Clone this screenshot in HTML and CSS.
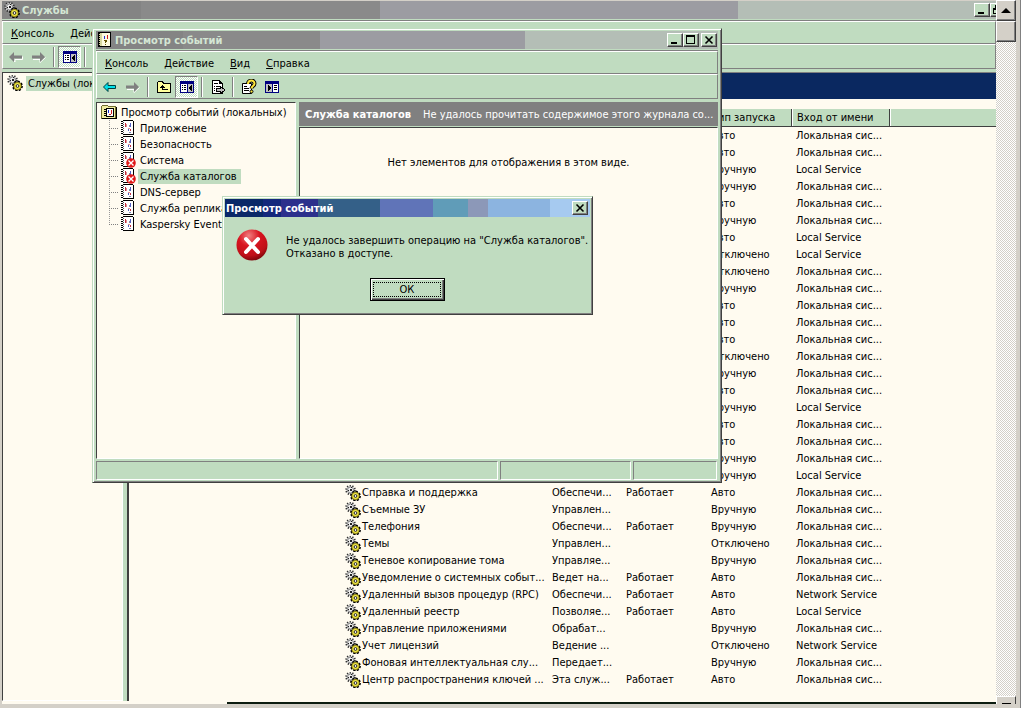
FILE: index.html
```
<!DOCTYPE html>
<html lang="ru">
<head>
    <meta charset="UTF-8">
    <meta name="viewport" content="width=device-width, initial-scale=1.0">
    <title>Службы</title>
    <link rel="stylesheet" href="styles.css">
</head>
<body>
    <svg class="sprite" aria-hidden="true">
        <symbol id="i-gears" viewBox="0 0 16 16">
            <circle cx="5.500" cy="5" r="4.300" fill="#e4e4e4" stroke="#333" stroke-width="2" stroke-dasharray="1.200 1.500"/>
            <circle cx="5.500" cy="5" r="3" fill="#eee" stroke="#888" stroke-width="1"/>
            <path d="M5 4h2v2H5zM3 5h1v1H3zM6 2h1v1H6z" fill="#222"/>
            <circle cx="10.500" cy="11" r="4.400" fill="#000" stroke="#000" stroke-width="2" stroke-dasharray="2 1.400"/>
            <circle cx="10.500" cy="11" r="3.600" fill="#f0e848" stroke="#a89c18" stroke-width="1"/>
            <circle cx="10.500" cy="11" r="1.400" fill="#fff" stroke="#222" stroke-width="1"/>
        </symbol>
        <symbol id="i-back" viewBox="0 0 16 16">
            <path d="M1.500 8 6 3.500V6.500h7.500v3H6v3z" fill="#00e0e8" stroke="#004040"/>
        </symbol>
        <symbol id="i-left-off" viewBox="0 0 16 16">
            <path d="M3 9 7 13V10.500h7.500v-3" fill="none" stroke="#fff"/>
            <path d="M1 8 6 3v3.500h8v3H6V13z" fill="#808080"/>
        </symbol>
        <symbol id="i-right-off" viewBox="0 0 16 16">
            <path d="M2 10.500h7V13.500L14.500 8.500" fill="none" stroke="#fff"/>
            <path d="M14 8 9 3v3.500H1v3h8V13z" fill="#808080"/>
        </symbol>
        <symbol id="i-up" viewBox="0 0 16 16" shape-rendering="crispEdges">
            <path d="M1.500 13.500v-10l1-1h4l1 2h7v9z" fill="#ffff9c" stroke="#000"/>
            <path d="M6 6h1v1h1v1h1v1H7v1h5v1H6V9H4V8h1V7h1z" fill="#000"/>
        </symbol>
        <symbol id="i-panes" viewBox="0 0 16 16" shape-rendering="crispEdges">
            <path d="M1 2h14v12H1z" fill="#000080"/>
            <path d="M2 5h6v8H2z" fill="#fff"/>
            <path d="M9 5h5v8H9z" fill="#c0c0c0"/>
            <path d="M3 6h1v1H3zM5 6h2v1H5zM3 8h1v1H3zM5 8h2v1H5zM3 10h1v1H3zM5 10h2v1H5zM12 6h1v6h-1v-1h-1v-1h-1V8h1V7h1z" fill="#000"/>
        </symbol>
        <symbol id="i-panes-right" viewBox="0 0 16 16" shape-rendering="crispEdges">
            <path d="M1 2h14v12H1z" fill="#000080"/>
            <path d="M2 5h6v8H2z" fill="#c0c0c0"/>
            <path d="M9 5h5v8H9z" fill="#fff"/>
            <path d="M10 6h3v1h-3zM10 8h3v1h-3zM10 10h3v1h-3zM4 6v6h1v-1h1v-1h1V8H6V7H5V6z" fill="#000"/>
        </symbol>
        <symbol id="i-export" viewBox="0 0 16 16" shape-rendering="crispEdges">
            <path d="M2.500 1.500h7l3 3v10h-10z" fill="#fff" stroke="#000"/>
            <path d="M9 2v3h3M4 4h4v1H4zM4 7h1v1H4zM6 7h5v1H6zM4 9h1v1H4zM4 11h1v1H4z" fill="#000"/>
            <path d="M6.500 9.500h4v-2l4.500 3.500-4.500 3.500v-2h-4z" fill="#c0c0c0" stroke="#000"/>
        </symbol>
        <symbol id="i-help" viewBox="0 0 16 16">
            <path d="M1.500 4.500h9v10h-9z" fill="#fff" stroke="#000"/>
            <path d="M3 7.500h3M3 9.500h5M3 11.500h5" stroke="#000"/>
            <path d="M7 5c0-4.500 6.500-4.500 6.500-.5 0 2.500-3 2.500-3 5" fill="none" stroke="#000" stroke-width="4"/>
            <path d="M7 5c0-4.500 6.500-4.500 6.500-.5 0 2.500-3 2.500-3 5" fill="none" stroke="#ffe83c" stroke-width="2"/>
            <circle cx="10.500" cy="12.500" r="1.500" fill="#ffe83c" stroke="#000"/>
        </symbol>
        <symbol id="i-log" viewBox="0 0 16 16" shape-rendering="crispEdges">
            <path d="M3 1h11v13H3z" fill="#fff"/>
            <path d="M3 0h10v1H3zM13 1h1v14H3v-1h10z" fill="#000"/>
            <path d="M2 1v14" stroke="#fff" stroke-width="2"/>
            <path d="M2 1v14" stroke="#000" stroke-width="2" stroke-dasharray="1 1"/>
            <path d="M3 2v12" stroke="#555" stroke-width="1" stroke-dasharray="1 1"/>
            <path d="M5 3h1v4H5zM10 9h1v2h-1z" fill="#c03040"/>
            <path d="M6 4h1v3H6zM8 8h2v1H8z" fill="#e09090"/>
            <path d="M10 3h1v4h-1zM8 9h1v2H8z" fill="#5060c0"/>
            <path d="M9 5h1v2H9zM9 12h2v1H9z" fill="#8088b0"/>
        </symbol>
        <symbol id="i-log-error" viewBox="0 0 16 16">
            <use href="#i-log"/>
            <circle cx="11" cy="11" r="4.800" fill="#e01818"/>
            <path d="m8.500 8.500 5 5m0-5-5 5" stroke="#fff" stroke-width="1.400"/>
        </symbol>
        <symbol id="i-viewer" viewBox="0 0 16 16" shape-rendering="crispEdges">
            <path d="M1.500.5h12v14h-12z" fill="#fffce0" stroke="#000"/>
            <path d="M2 1h3v13H2z" fill="#d8d8a0"/>
            <path d="M2 1v13" stroke="#000" stroke-width="2" stroke-dasharray="1 1"/>
            <path d="M13 1h1v14H2v-1h11z" fill="#000"/>
            <path d="M7 4h1v3H7z" fill="#2030d0"/>
            <path d="M10 3h1v4h-1z" fill="#d02020"/>
            <path d="M7 8h3v2H9v1H8V9H7zM8 12h1v1H8z" fill="#605000"/>
        </symbol>
        <symbol id="i-folder-log" viewBox="0 0 16 16" shape-rendering="crispEdges">
            <path d="M.5 14.500v-12l1-1h5l1 1h7v12z" fill="#f0eca0" stroke="#706c30"/>
            <path d="M15 3h1v12H1v-1h14z" fill="#000"/>
            <path d="M5.500 4.500h7v8h-7z" fill="#fff" stroke="#000"/>
            <path d="M4 5v8" stroke="#000" stroke-width="2" stroke-dasharray="1 1"/>
            <path d="M7 6h1v3H7z" fill="#2030d0"/>
            <path d="M10 6h1v4h-1zM8 10h2v1H8z" fill="#d02020"/>
        </symbol>
        <symbol id="i-min" viewBox="0 0 12 10" shape-rendering="crispEdges">
            <path d="M2 7h6v2H2z" fill="#000"/>
        </symbol>
        <symbol id="i-max" viewBox="0 0 12 10" shape-rendering="crispEdges">
            <path d="M1 0h9v9H1zM2 2v6h7V2z" fill="#000" fill-rule="evenodd"/>
        </symbol>
        <symbol id="i-restore" viewBox="0 0 12 10" shape-rendering="crispEdges">
            <path d="M3 0h6v6H7v3H1V3h2zM4 2v1h3v2h1V2zM2 5v3h4V5z" fill="#000" fill-rule="evenodd"/>
        </symbol>
        <symbol id="i-close" viewBox="0 0 12 10">
            <path d="m2.500 1.500 7 7m0-7-7 7" stroke="#000" stroke-width="1.600"/>
        </symbol>
        <symbol id="i-stop" viewBox="0 0 32 32">
            <defs>
                <radialGradient id="red" cx=".4" cy=".2" r=".85">
                    <stop offset="0" stop-color="#f08080"/>
                    <stop offset=".4" stop-color="#d81420"/>
                    <stop offset=".75" stop-color="#c01018"/>
                    <stop offset="1" stop-color="#700408"/>
                </radialGradient>
            </defs>
            <circle cx="16" cy="16" r="15.500" fill="url(#red)"/>
            <path d="m10 10 12 13m0-13-12 13" stroke="#fff" stroke-width="4" stroke-linecap="round"/>
        </symbol>
    </svg>

    <div class="desktop">
        <main class="window services">
            <header class="titlebar">
                <svg class="icon"><use href="#i-gears"/></svg>
                <h1>Службы</h1>
                <div class="controls">
                    <button aria-label="Свернуть"><svg><use href="#i-min"/></svg></button>
                    <button aria-label="Восстановить"><svg><use href="#i-restore"/></svg></button>
                </div>
            </header>
            <nav class="menu">
                <button><u>К</u>онсоль</button>
                <button><u>Д</u>ействие</button>
            </nav>
            <div class="toolbar">
                <button aria-label="Назад" disabled><svg class="icon"><use href="#i-left-off"/></svg></button>
                <button aria-label="Вперед" disabled><svg class="icon"><use href="#i-right-off"/></svg></button>
                <span class="sep"></span>
                <button class="pressed" aria-label="Дерево консоли"><svg class="icon"><use href="#i-panes"/></svg></button>
                <span class="sep"></span>
            </div>
            <div class="services-body">
                <div class="services-tree">
                    <div class="node">
                        <svg class="icon"><use href="#i-gears"/></svg>
                        <span class="label selected">Службы (локальные)</span>
                    </div>
                </div>
                <section class="services-pane">
                    <div class="banner"></div>
                    <table class="list">
                        <colgroup>
                            <col class="c-name"><col class="c-desc"><col class="c-state"><col class="c-start"><col class="c-login"><col>
                        </colgroup>
                        <thead>
                            <tr><th></th><th></th><th></th><th>Тип запуска</th><th>Вход от имени</th><th></th></tr>
                        </thead>
                        <tbody id="rows"></tbody>
                    </table>
                </section>
            </div>
            <div class="bottom-edge"></div>
        </main>
        <div class="scrollbar">
            <button class="scroll-up" aria-label="Вверх"></button>
            <div class="thumb"></div>
            <div class="track"></div>
            <button class="scroll-down" aria-label="Вниз"></button>
        </div>
    </div>

    <section class="window viewer">
        <header class="titlebar">
            <svg class="icon"><use href="#i-viewer"/></svg>
            <h2>Просмотр событий</h2>
            <div class="controls">
                <button aria-label="Свернуть"><svg><use href="#i-min"/></svg></button>
                <button aria-label="Развернуть"><svg><use href="#i-max"/></svg></button>
                <button class="close" aria-label="Закрыть"><svg><use href="#i-close"/></svg></button>
            </div>
        </header>
        <nav class="menu">
            <button><u>К</u>онсоль</button>
            <button><u>Д</u>ействие</button>
            <button><u>В</u>ид</button>
            <button><u>С</u>правка</button>
        </nav>
        <div class="toolbar">
            <button aria-label="Назад"><svg class="icon"><use href="#i-back"/></svg></button>
            <button aria-label="Вперед" disabled><svg class="icon"><use href="#i-right-off"/></svg></button>
            <span class="sep"></span>
            <button aria-label="Вверх на один уровень"><svg class="icon"><use href="#i-up"/></svg></button>
            <button class="pressed" aria-label="Дерево консоли"><svg class="icon"><use href="#i-panes"/></svg></button>
            <span class="sep"></span>
            <button aria-label="Экспортировать список"><svg class="icon"><use href="#i-export"/></svg></button>
            <span class="sep"></span>
            <button aria-label="Справка"><svg class="icon"><use href="#i-help"/></svg></button>
            <button aria-label="Панель действий"><svg class="icon"><use href="#i-panes-right"/></svg></button>
        </div>
        <div class="viewer-body">
            <div class="viewer-tree">
                <div class="node">
                    <svg class="icon"><use href="#i-folder-log"/></svg>
                    <span class="label">Просмотр событий (локальных)</span>
                </div>
                <ul>
                    <li class="node"><svg class="icon"><use href="#i-log"/></svg><span class="label">Приложение</span></li>
                    <li class="node"><svg class="icon"><use href="#i-log"/></svg><span class="label">Безопасность</span></li>
                    <li class="node"><svg class="icon"><use href="#i-log-error"/></svg><span class="label">Система</span></li>
                    <li class="node"><svg class="icon"><use href="#i-log-error"/></svg><span class="label selected">Служба каталогов</span></li>
                    <li class="node"><svg class="icon"><use href="#i-log"/></svg><span class="label">DNS-сервер</span></li>
                    <li class="node"><svg class="icon"><use href="#i-log"/></svg><span class="label">Служба репликации</span></li>
                    <li class="node"><svg class="icon"><use href="#i-log"/></svg><span class="label">Kaspersky Event Log</span></li>
                </ul>
            </div>
            <div class="viewer-pane">
                <div class="pane-head"><b>Служба каталогов</b><span>Не удалось прочитать содержимое этого журнала со...</span></div>
                <p class="empty">Нет элементов для отображения в этом виде.</p>
            </div>
        </div>
        <footer class="status"><span></span><span></span><span></span></footer>
    </section>

    <div class="window dialog" role="alertdialog" aria-labelledby="dlg-title">
        <header class="titlebar">
            <h2 id="dlg-title">Просмотр событий</h2>
            <div class="controls">
                <button class="close" aria-label="Закрыть"><svg><use href="#i-close"/></svg></button>
            </div>
        </header>
        <div class="message">
            <svg class="stop"><use href="#i-stop"/></svg>
            <p>Не удалось завершить операцию на "Служба каталогов".<br>Отказано в доступе.</p>
        </div>
        <button class="ok"><span>ОК</span></button>
    </div>

    <script>
        const A = "Авто", M = "Вручную", D = "Отключено";
        const SYS = "Локальная сис...", LOC = "Local Service", NET = "Network Service";
        const R = "Работает";

        // name, description, state, startup, account
        const services = [
            ["", "", "", A, SYS], ["", "", "", A, SYS], ["", "", "", M, LOC], ["", "", "", M, SYS],
            ["", "", "", A, SYS], ["", "", "", M, SYS], ["", "", "", A, LOC], ["", "", "", D, LOC],
            ["", "", "", D, SYS], ["", "", "", M, SYS], ["", "", "", A, SYS], ["", "", "", A, SYS],
            ["", "", "", A, SYS], ["", "", "", D, SYS], ["", "", "", M, SYS], ["", "", "", A, SYS],
            ["", "", "", M, LOC], ["", "", "", A, SYS], ["", "", "", A, SYS], ["", "", "", M, SYS],
            ["", "", "", M, LOC],
            ["Справка и поддержка", "Обеспечи...", R, A, SYS],
            ["Съемные ЗУ", "Управлен...", "", M, SYS],
            ["Телефония", "Обеспечи...", R, M, SYS],
            ["Темы", "Управлен...", "", D, SYS],
            ["Теневое копирование тома", "Управляе...", "", M, SYS],
            ["Уведомление о системных событ...", "Ведет на...", R, A, SYS],
            ["Удаленный вызов процедур (RPC)", "Обеспечи...", R, A, NET],
            ["Удаленный реестр", "Позволяе...", R, A, LOC],
            ["Управление приложениями", "Обрабат...", "", M, SYS],
            ["Учет лицензий", "Ведение ...", "", D, NET],
            ["Фоновая интеллектуальная слу...", "Передает...", "", M, SYS],
            ["Центр распространения ключей ...", "Эта служ...", R, A, SYS]
        ];

        const icon = '<svg class="icon"><use href="#i-gears"/></svg>';
        document.getElementById("rows").innerHTML = services.map(s =>
            `<tr><td>${s[0] ? icon + s[0] : ""}</td><td>${s[1]}</td><td>${s[2]}</td><td>${s[3]}</td><td>${s[4]}</td><td></td></tr>`
        ).join("");
    </script>
</body>
</html>
```
FILE: styles.css
```
:root { --face: #c0dcc0; --paper: #fffbf0; --shadow: #808080; --dark: #404040; --grey: #d4d0c8; }
* { box-sizing: border-box; }
body { margin: 0; height: 100vh; overflow: hidden; background: var(--grey); color: #000; font: 11px/13px "DejaVu Sans Condensed", "Noto Sans", sans-serif; }
h1, h2, p, ul { margin: 0; padding: 0; font-size: 11px; }
button { font: inherit; color: inherit; padding: 0; border: 0; background: none; white-space: nowrap; }
.sprite { position: absolute; width: 0; height: 0; }
.icon { width: 16px; height: 16px; flex: none; display: block; }

.desktop { display: flex; height: 100vh; padding: 0 4px 4px 2px; border-right: 1px solid var(--shadow); }
.window { display: flex; flex-direction: column; background: var(--face); }

/* title bars */
.titlebar { display: flex; align-items: center; flex: none; height: 18px; padding: 0 2px; gap: 2px; color: #d4e6d4; background: linear-gradient(90deg, #848484 0 14%, #8a8a8a 14% 38%, #9c9ca2 38% 74%, #b4beb6 74%); }
.titlebar h1, .titlebar h2 { flex: 1; font-weight: bold; white-space: nowrap; }
.controls { display: flex; }
.controls button { display: flex; justify-content: center; width: 16px; height: 14px; padding-top: 1px; background: var(--face); border: 1px solid; border-color: #fff var(--dark) var(--dark) #fff; box-shadow: inset -1px -1px var(--shadow); }
.controls svg { width: 12px; height: 10px; flex: none; }
.controls .close { margin-left: 2px; }

/* menu and toolbar */
.menu { display: flex; flex: none; height: 23px; padding-top: 1px; border: 1px solid; border-color: #fff var(--shadow) var(--shadow) #fff; box-shadow: 0 -1px var(--shadow); margin-top: 2px; }
.menu button { padding: 0 8px; }
.toolbar { display: flex; align-items: center; flex: none; height: 25px; border: 1px solid; border-color: #fff var(--shadow) var(--shadow) #fff; padding-left: 1px; }
.toolbar button { display: flex; align-items: center; justify-content: center; width: 23px; height: 22px; }
.toolbar .pressed { background: repeating-conic-gradient(#fff 0 25%, var(--face) 0 50%) 0 0 / 2px 2px; border: 1px solid; border-color: var(--shadow) #fff #fff var(--shadow); }
.sep { width: 2px; height: 20px; margin: 0 3px; border-left: 1px solid var(--shadow); border-right: 1px solid #fff; }

/* services */
.services { flex: 1; min-width: 0; overflow: hidden; border-top: 1px solid var(--grey); }
/* the buttons run on under the scroll bar */
.services .controls { margin-right: -12px; }
.services-body { display: flex; flex: 1; min-height: 0; margin-top: 3px; }
.services-tree { flex: none; width: 121px; overflow: hidden; background: var(--paper); border: 1px solid; border-color: var(--dark) #fff #fff var(--dark); padding: 1px 0 0 4px; }
.services-pane { flex: 1; min-width: 0; margin-left: 4px; overflow: hidden; background: var(--paper); border-left: 2px solid var(--dark); border-top: 1px solid var(--shadow); }
.banner { height: 26px; margin-bottom: 10px; background: #0a2860; }
.node { display: flex; align-items: center; height: 16px; gap: 2px; white-space: nowrap; }
.label { padding: 1px 2px; }
.label.selected { background: var(--face); padding-right: 4px; }
.services-tree .node { height: 18px; gap: 3px; }
.list { table-layout: fixed; width: calc(100% - 215px); margin-left: 215px; border-collapse: separate; border-spacing: 0; }
.list .c-name { width: 204px; }
.list .c-desc { width: 74px; }
.list .c-state, .list .c-start { width: 85px; }
.list .c-login { width: 98px; }
.list th { height: 18px; padding: 0 5px; text-align: left; font-weight: normal; white-space: nowrap; background: var(--face); border-bottom: 1px solid var(--dark); border-right: 1px solid var(--dark); box-shadow: inset 1px 0 #fff; }
.list th:last-child { border-right: 0; }
.list td { height: 17px; padding: 0 4px; white-space: nowrap; overflow: hidden; }
.list td:first-child { padding: 0 0 0 1px; }
.list .icon { display: inline-block; vertical-align: middle; margin-right: 1px; }
.bottom-edge { flex: none; height: 3px; background: linear-gradient(90deg, var(--paper) 225px, #0c1c10 225px) 0 100% / 100% 2px no-repeat var(--paper); }

/* outer scroll bar */
.scrollbar { display: flex; flex-direction: column; width: 20px; }
.scroll-up, .scroll-down, .thumb { flex: none; width: 20px; height: 21px; background: var(--grey); border: 1px solid; border-color: #fff var(--dark) var(--dark) #fff; box-shadow: inset -1px -1px var(--shadow); }
.scroll-up::before { content: ""; display: block; width: 0; margin: 0 auto; border: 5px solid transparent; border-top: 0; border-bottom-color: #000; }
.track { flex: 1; background: repeating-conic-gradient(#fff 0 25%, var(--grey) 0 50%) 0 0 / 2px 2px; }
.scroll-down { height: 8px; border-bottom: 0; box-shadow: none; }
.scroll-down::before { content: ""; display: block; width: 9px; height: 1px; margin: 5px auto 0; background: #000; }

/* event viewer */
.viewer { position: absolute; left: 92px; top: 28px; width: 630px; height: 455px; padding: 2px 3px 1px 3px; border: 1px solid; border-color: var(--face) var(--dark) var(--dark) var(--face); box-shadow: inset 1px 1px #fff, inset -1px -1px var(--shadow); }
.viewer .titlebar { padding: 0 1px; background: linear-gradient(90deg, #848484 0 14%, #8a8a8a 14% 36%, #9c9ca2 36% 69%, #b4beb6 69%); }
.viewer-body { display: flex; flex: 1; min-height: 0; margin-top: 3px; gap: 3px; }
.viewer-tree { flex: none; width: 200px; overflow: hidden; background: var(--paper); border: 1px solid; border-color: var(--dark) #fff #fff var(--dark); padding: 1px 0 0 4px; }
.viewer-tree ul { list-style: none; margin-left: 8px; background: linear-gradient(var(--paper), var(--paper)) 0 100% / 1px 8px no-repeat, repeating-linear-gradient(#999 0 1px, transparent 1px 2px) 0 0 / 1px 100% no-repeat; }
.viewer-tree li::before { content: ""; width: 9px; border-top: 1px dotted #808080; }
.viewer-pane { display: flex; flex-direction: column; flex: 1; min-width: 0; }
.pane-head { display: flex; align-items: center; flex: none; height: 24px; gap: 12px; padding: 0 0 0 6px; color: #fff; background: var(--shadow); white-space: nowrap; }
.empty { flex: 1; margin-top: 1px; padding-top: 28px; text-align: center; background: var(--paper); border: 1px solid; border-color: var(--dark) #fff #fff var(--dark); }
.status { display: grid; grid-template-columns: 402fr 131fr 84fr; gap: 2px; flex: none; height: 19px; margin: 2px 1px 1px 0; }
.status span { border: 1px solid; border-color: var(--shadow) #fff #fff var(--shadow); }

/* message box */
.dialog { position: absolute; left: 222px; top: 196px; width: 371px; height: 119px; padding: 2px; border: 1px solid; border-color: var(--face) var(--dark) var(--dark) var(--face); box-shadow: inset 1px 1px #fff, inset -1px -1px var(--shadow); }
.dialog .titlebar { padding: 0 2px 0 1px; color: #fff; background: linear-gradient(90deg, #0a2868 0 38px, #14287c 38px 56px, #2c308c 56px 93px, #346088 93px 155px, #6074b8 155px 208px, #609cb8 208px 243px, #8c98b8 243px 263px, #8cb4e0 263px 325px, #a6caf0 325px); }
.message { display: flex; gap: 18px; padding: 12px 0 0 11px; }
.message p { padding-top: 5px; white-space: nowrap; }
.stop { flex: none; width: 32px; height: 32px; }
.ok { align-self: center; width: 75px; height: 23px; margin: 17px 0 0; padding: 2px; border: 1px solid #000; box-shadow: inset 1px 1px #fff, inset -1px -1px var(--dark), inset -2px -2px var(--shadow); }
.ok span { display: block; margin: 0 1px 1px 0; border: 1px dotted #000; }
```
